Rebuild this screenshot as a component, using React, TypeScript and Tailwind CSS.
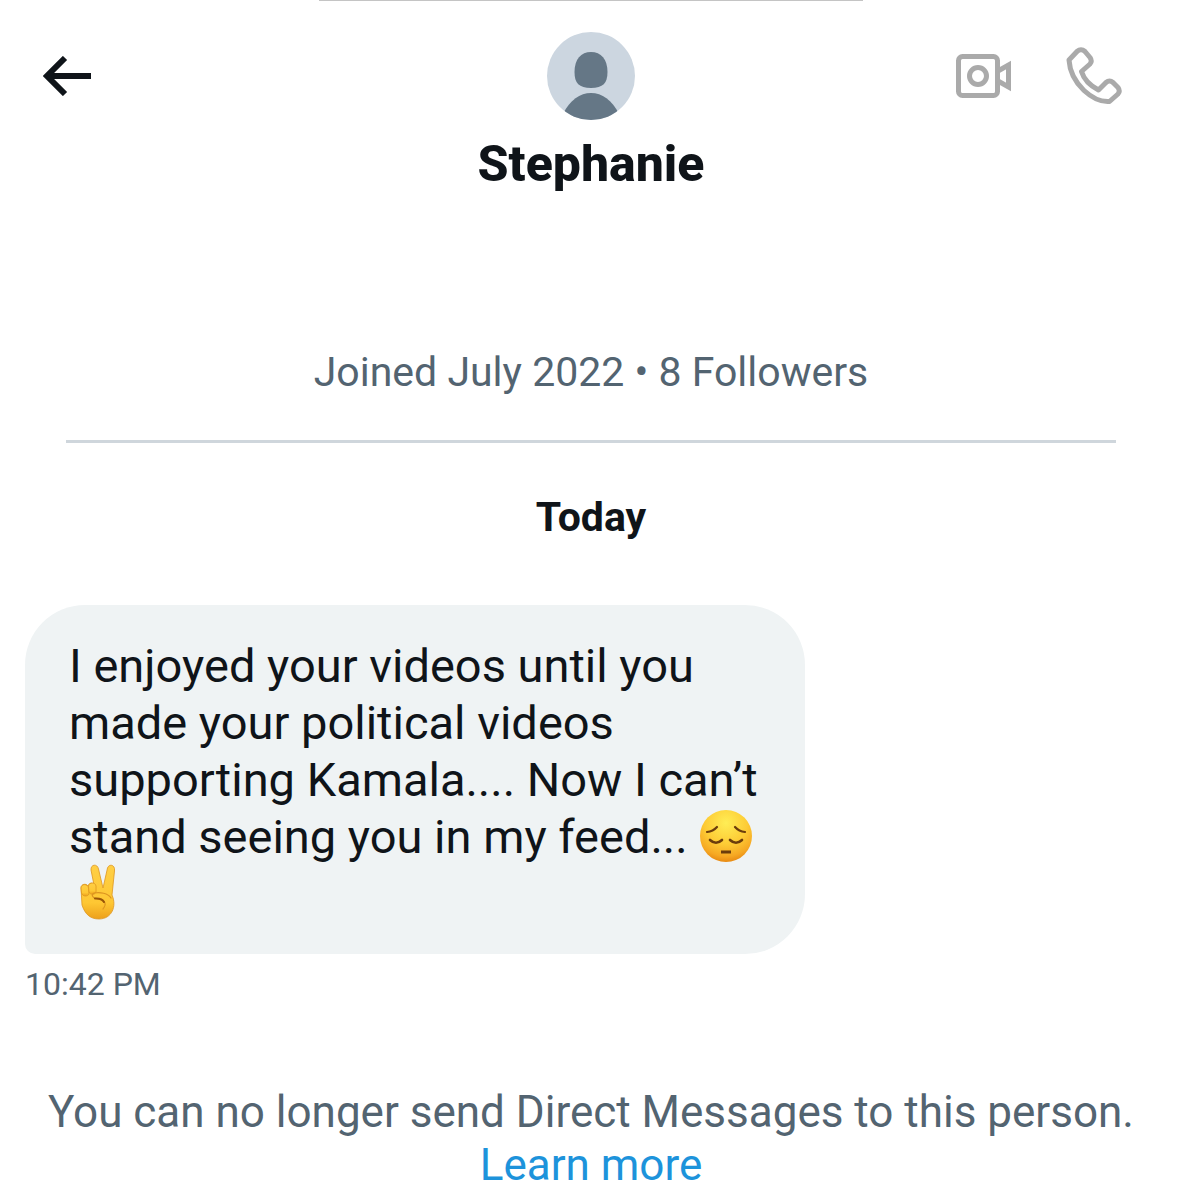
import React from 'react';

const BackIcon: React.FC = () => (
  <svg viewBox="0 0 48 40" className="w-12 h-10" fill="none" stroke="currentColor" strokeWidth="6" aria-hidden="true">
    <path d="M48 20H4" />
    <path d="M22 2L4 20L22 38" />
  </svg>
);

const VideoIcon: React.FC = () => (
  <svg viewBox="0 0 56 44" className="w-14 h-11" fill="none" stroke="currentColor" strokeWidth="5" aria-hidden="true">
    <rect x="2.5" y="2.5" width="39" height="39" rx="4" />
    <circle cx="22" cy="22" r="8.5" />
    <path d="M42 17L52.500 11V33L42 27" />
  </svg>
);

const PhoneIcon: React.FC = () => (
  <svg viewBox="0 0 56 58" className="w-14 h-[58px]" fill="none" stroke="currentColor" strokeWidth="5" strokeLinejoin="round" aria-hidden="true">
    <path d="M11 4.500Q15 1 19 4.500L24 10.500Q26.500 14 24 17L15.500 24.500Q19 36 32.500 43L40 35.500Q43.500 32.500 47 35.500L52 40.500Q54.500 44 52 47L43.500 54.500Q31 55.500 18 43.500Q4 30 3 13Z" />
  </svg>
);

const Avatar: React.FC = () => (
  <svg viewBox="0 0 88 88" className="w-[88px] h-[88px] rounded-full" role="img" aria-label="Stephanie">
    <rect width="88" height="88" fill="#ccd6e0" />
    <path d="M44 20C54 20 60.500 27 60.500 40C60.500 51 56 56 44 56C32 56 27.500 51 27.500 40C27.500 27 34 20 44 20Z" fill="#657786" />
    <path d="M16 82C23 68 33 61 44 61S65 68 72 82V88H16Z" fill="#657786" />
  </svg>
);

const PensiveFace: React.FC = () => (
  <svg viewBox="0 0 54 54" className="inline-block w-[54px] h-[54px] -mt-2 -mb-[10px] align-baseline" role="img" aria-label="Pensive face">
    <defs>
      <radialGradient id="face" cx="50%" cy="25%" r="75%">
        <stop offset="0" stopColor="#ffed55" />
        <stop offset="0.55" stopColor="#fdcb35" />
        <stop offset="0.85" stopColor="#f6a823" />
        <stop offset="1" stopColor="#e88a12" />
      </radialGradient>
    </defs>
    <circle cx="27" cy="27" r="26" fill="url(#face)" />
    <g fill="none" stroke="#6b3c0c" strokeWidth="2.200" strokeLinecap="round">
      <path d="M8 23Q14 22.500 18 18" />
      <path d="M36 18Q40 22.500 46 23" />
      <path d="M11 31Q17 36.500 23 31" strokeWidth="2.600" />
      <path d="M31 31Q37 36.500 43 31" strokeWidth="2.600" />
      <path d="M22 43H32" strokeWidth="3" strokeLinecap="butt" />
    </g>
  </svg>
);

const VictoryHand: React.FC = () => (
  <svg viewBox="0 0 54 56" className="inline-block w-[54px] h-14 -mt-2 -mb-[10px] ml-[2px] align-baseline" role="img" aria-label="Victory hand">
    <defs>
      <linearGradient id="hand" x1="0" y1="0" x2="0" y2="1">
        <stop offset="0" stopColor="#ffcf45" />
        <stop offset="0.7" stopColor="#fec733" />
        <stop offset="1" stopColor="#eda01b" />
      </linearGradient>
    </defs>
    <g fill="url(#hand)" stroke="#dd9620" strokeWidth="0.800">
      <path d="M24 26L20 6C19.500 0 26.500 -0.500 27.500 5L32 24L36.500 4C38 -0.500 44.500 0.500 43.500 7L41 31C46 42 41 55 28 55C19 55 14 50 11 41L10 24C10 20 15 19 17 22C18 18 24 18 24 23Z" />
      <path d="M10 24C10 19.500 17 19.500 17.500 24L18 30C17 33 11 32.500 10.500 29Z" />
      <path d="M17.500 22C18 18 24.500 18 25 22V28C24 31 19 31 18 28Z" />
    </g>
    <path d="M40 34C37 29 29 28 23 29C19.500 31 22 34 25 34.500C29 35.500 33 36 34 39C35 42 33 43 32 45" fill="none" stroke="#dc9420" strokeWidth="1.200" strokeLinecap="round" />
    <path d="M24 34.500Q31 34 33 38" fill="none" stroke="#985508" strokeWidth="2" strokeLinecap="round" />
  </svg>
);

const App: React.FC = () => {
  return (
    <div className="bg-white text-[#0f1419] font-[Roboto,sans-serif]">
      <div className="h-px w-[46%] mx-auto bg-[#c4c4c4]" />

      {/* Conversation header */}
      <header className="grid grid-cols-3 items-center pt-[31px] pl-[43px] pr-[60px]">
        <button type="button" aria-label="Back" className="justify-self-start">
          <BackIcon />
        </button>
        <div className="justify-self-center pl-[18px]">
          <Avatar />
        </div>
        <div className="justify-self-end flex items-center gap-[54px] text-[#aaaaaa]">
          <button type="button" aria-label="Video call">
            <VideoIcon />
          </button>
          <button type="button" aria-label="Audio call">
            <PhoneIcon />
          </button>
        </div>
      </header>
      <h1 className="mt-4 text-center text-[50px] leading-[56px] font-extrabold">Stephanie</h1>

      {/* Profile summary */}
      <section className="mx-[66px] mt-[156px] pb-11 border-b-3 border-[#cfd6dc] text-center">
        <p className="text-[41px] leading-12 text-[#536471]">Joined July 2022 • 8 Followers</p>
      </section>

      {/* Messages */}
      <main className="px-[25px]">
        <h2 className="mt-[50px] text-center text-[41px] leading-12 font-bold">Today</h2>
        <div className="mt-16 w-[780px] max-w-full px-11 py-8 bg-[#eff3f4] rounded-[60px] rounded-bl-[10px]">
          <p className="text-[47px] leading-[57px]">
            I enjoyed your videos until you
            <br />
            made your political videos
            <br />
            supporting Kamala.... Now I can’t
            <br />
            stand seeing you in my feed... <PensiveFace />
            <br />
            <VictoryHand />
          </p>
        </div>
        <time className="block mt-[10px] text-[32px] leading-10 text-[#536471]">10:42 PM</time>
      </main>

      <footer className="mt-[82px] pb-2 text-center text-[44px] leading-[53px] text-[#536471]">
        <p>You can no longer send Direct Messages to this person.</p>
        <a href="#learn-more" className="text-[#1d93db]">Learn more</a>
      </footer>
    </div>
  );
};

export default App;
